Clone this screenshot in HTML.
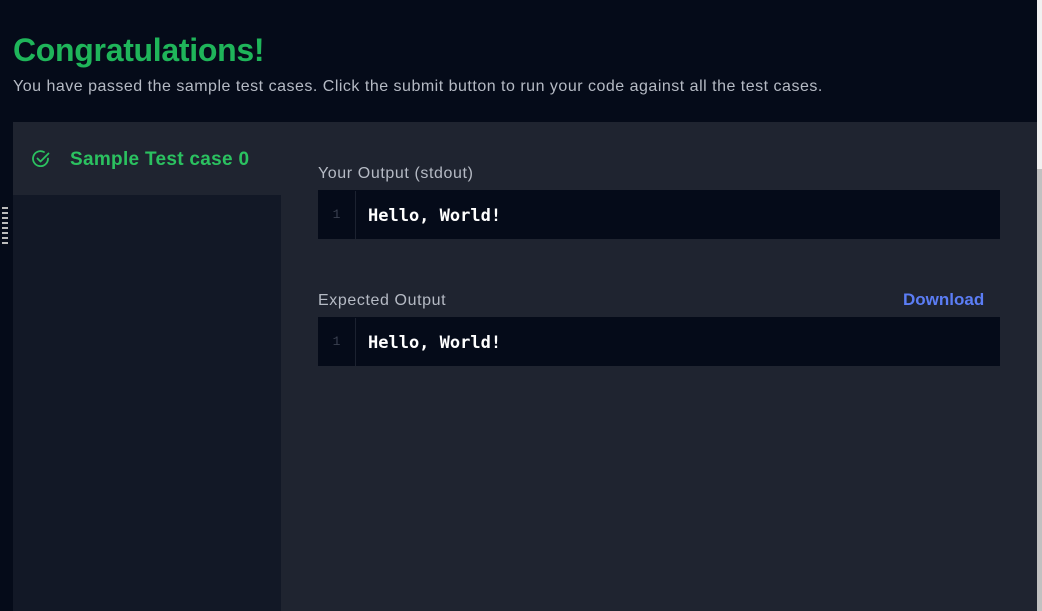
<!DOCTYPE html>
<html><head><style>
body{margin:0;width:1042px;height:611px;background:#050b19;position:relative;overflow:hidden;font-family:"Liberation Sans",sans-serif}
.a{position:absolute}
h1{position:absolute;left:13px;top:32px;margin:0;font-size:32px;font-weight:bold;color:#1fb55a;letter-spacing:-0.3px}
.sub{left:13px;top:78px;font-size:16px;color:#b5bac4;letter-spacing:0.5px;white-space:nowrap}
.panel{left:13px;top:122px;width:1024px;height:489px;background:#1f2430}
.side{left:13px;top:195px;width:268px;height:416px;background:#121826}
.tc{left:70px;top:149px;font-size:19px;font-weight:bold;color:#2bc160;letter-spacing:0.3px}
.lab{font-size:16px;color:#b5bac4;letter-spacing:0.6px}
.code{left:318px;width:682px;height:49px;background:#050b19}
.code .n{position:absolute;left:0;top:1px;width:37px;height:48px;border-right:1px solid #1c2230;color:#3a4150;font-family:"Liberation Mono",monospace;font-size:13px;text-align:center;line-height:48px}
.code .t{position:absolute;left:50px;top:2px;line-height:49px;color:#fff;font-family:"DejaVu Sans Mono","Liberation Mono",monospace;font-weight:bold;font-size:17px}
.dl{left:903px;top:290px;font-size:17px;font-weight:bold;color:#5b7df5}
.sb{left:1037px;top:0;width:5px;height:611px;background:#f1f1f1}
.th{left:1037px;top:169px;width:5px;height:442px;background:#c1c1c1}
.dots{left:2px;top:207px;width:6px;height:38px;background:repeating-linear-gradient(to bottom,#bbb 0 2px,transparent 2px 5px)}
</style></head><body>
<h1>Congratulations!</h1>
<div class="a sub">You have passed the sample test cases. Click the submit button to run your code against all the test cases.</div>
<div class="a panel"></div>
<div class="a side"></div>
<svg class="a" style="left:31px;top:149px" width="20" height="20" viewBox="0 0 20 20" fill="none" stroke="#2bc160" stroke-width="1.8" stroke-linecap="round" stroke-linejoin="round"><path d="M17 9.5A7.5 7.5 0 1 1 13 3"/><path d="M6.5 9.5l3 3 8-8"/></svg>
<div class="a tc">Sample Test case 0</div>
<div class="a lab" style="left:318px;top:165px">Your Output (stdout)</div>
<div class="a code" style="top:190px"><div class="n">1</div><div class="t">Hello, World!</div></div>
<div class="a lab" style="left:318px;top:292px">Expected Output</div>
<div class="a dl">Download</div>
<div class="a code" style="top:317px"><div class="n">1</div><div class="t">Hello, World!</div></div>
<div class="a dots"></div>
<div class="a sb"></div><div class="a th"></div>
</body></html>
